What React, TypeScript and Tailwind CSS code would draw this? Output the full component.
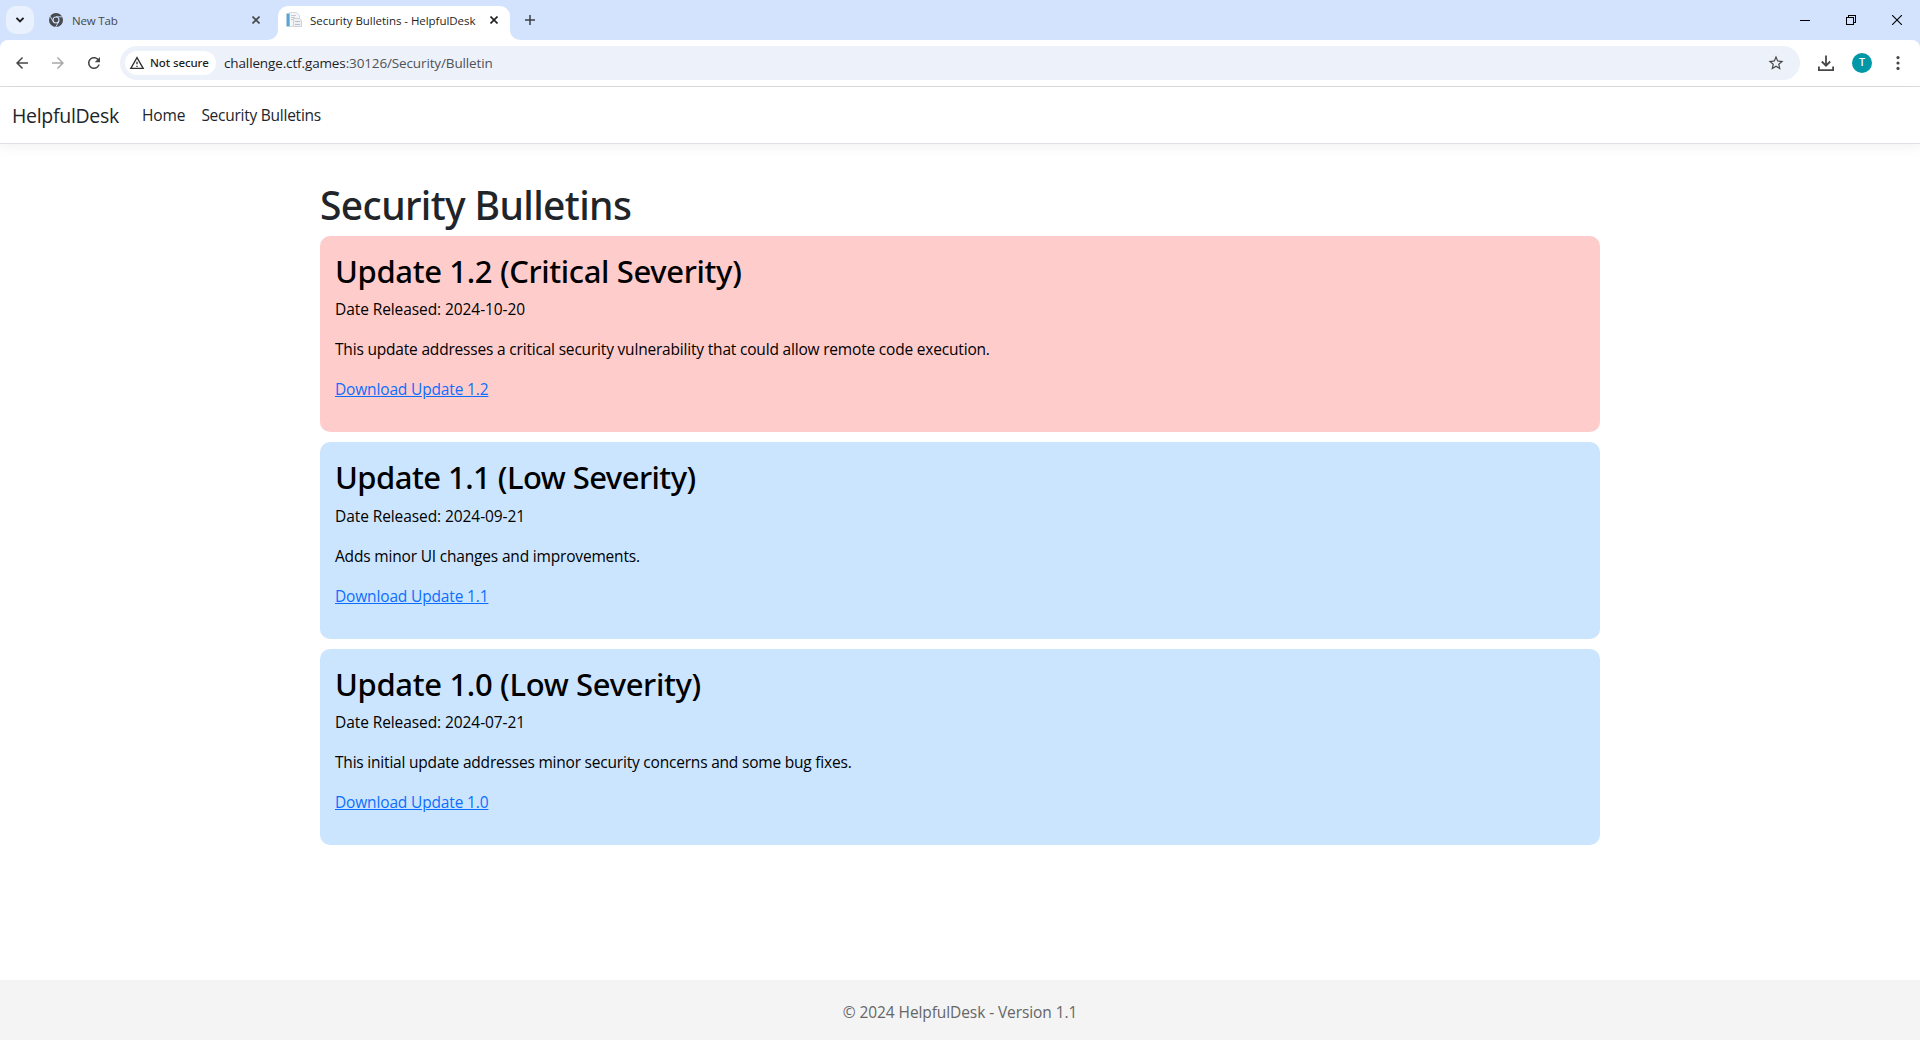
import type { ReactNode } from "react";

type Bulletin = {
  title: string;
  titleClass: string;
  date: string;
  body: string;
  bodyClass: string;
  link: string;
  color: string;
};

const bulletins: Bulletin[] = [
  {
    title: "Update 1.2 (Critical Severity)",
    titleClass: "tracking-[-0.35px]",
    date: "2024-10-20",
    body: "This update addresses a critical security vulnerability that could allow remote code execution.",
    bodyClass: "tracking-[-0.19px]",
    link: "Download Update 1.2",
    color: "bg-[#ffcccc]",
  },
  {
    title: "Update 1.1 (Low Severity)",
    titleClass: "tracking-[-0.54px]",
    date: "2024-09-21",
    body: "Adds minor UI changes and improvements.",
    bodyClass: "tracking-[-0.18px]",
    link: "Download Update 1.1",
    color: "bg-[#cce5ff]",
  },
  {
    title: "Update 1.0 (Low Severity)",
    titleClass: "tracking-[-0.33px]",
    date: "2024-07-21",
    body: "This initial update addresses minor security concerns and some bug fixes.",
    bodyClass: "tracking-[-0.205px]",
    link: "Download Update 1.0",
    color: "bg-[#cce5ff]",
  },
];

function Material({ size, d, className = "" }: { size: number; d: string; className?: string }) {
  return (
    <svg width={size} height={size} viewBox="0 0 24 24" fill="currentColor" className={"shrink-0 " + className}>
      <path d={d} />
    </svg>
  );
}

function ChromeLogo() {
  return (
    <svg width="14" height="14" viewBox="0 0 14 14" className="shrink-0">
      <circle cx="7" cy="7" r="7" fill="#474a4f" />
      <g stroke="#d3e3fd" strokeWidth="0.9" fill="none">
        <path d="M7 3.8H13.4" />
        <path d="M4.2 8.6L1 3.1" />
        <path d="M9.8 8.6L6.6 14.2" />
      </g>
      <circle cx="7" cy="7" r="3.5" fill="#d3e3fd" />
      <circle cx="7" cy="7" r="2.4" fill="#474a4f" />
    </svg>
  );
}

function PageIcon() {
  return (
    <svg width="16" height="16" viewBox="0 0 16 16" className="shrink-0">
      <path d="M3.5 0.5h7l3 3v11h-10z" fill="#f3f5f8" stroke="#d5dae0" />
      <rect x="0.5" y="1.5" width="3" height="13" fill="#5ba3d0" />
      <path d="M5 3.5h5M5 5.5h4M5 7.5h2" stroke="#c3cad2" />
      <path d="M7.5 6.500h6l2 2v6h-8z" fill="#eef0f3" stroke="#cdd2d9" />
      <path d="M9 9.5h5M9 12.500h5" stroke="#b9c0ca" />
    </svg>
  );
}

function Cross({ className }: { className: string }) {
  return (
    <svg width="8" height="8" viewBox="0 0 8 8" className={"shrink-0 " + className} stroke="currentColor" strokeWidth="1.6">
      <path d="M0.5 0.500L7.500 7.500M7.500 0.500L0.500 7.500" />
    </svg>
  );
}

function TabCurve({ flip = false }: { flip?: boolean }) {
  return (
    <svg width="10" height="10" viewBox="0 0 10 10" className={"shrink-0 self-end " + (flip ? "-scale-x-100" : "")}>
      <path d="M10 0V10H0A10 10 0 0 0 10 0Z" fill="#fff" />
    </svg>
  );
}

function TabStrip() {
  return (
    <div className="flex h-10 bg-[#d3e3fd] pt-1.5 pl-1.5">
      <div className="flex size-7 items-center justify-center rounded-[10px] bg-[#e9f1fe] text-[#1f1f1f]">
        <svg width="8" height="6" viewBox="0 0 8 6" fill="none" stroke="currentColor" strokeWidth="1.9">
          <path d="M0.500 0.800L4 4.300L7.500 0.800" />
        </svg>
      </div>
      <div className="flex h-7 w-[234px] items-center pl-[15px] text-[#474747]">
        <ChromeLogo />
        <span className="ml-[9px] pt-px text-[11.5px] tracking-[-0.18px]">New Tab</span>
        <Cross className="mr-[8px] ml-auto text-[#474747]" />
      </div>
      <TabCurve />
      <div className="flex h-[34px] w-[232px] items-start rounded-t-[10px] bg-white">
        <div className="flex h-7 w-full items-center pl-2 text-[#1f1f1f]">
          <PageIcon />
          <span className="ml-2 pt-px whitespace-nowrap text-[11.5px] tracking-[-0.04px]">
            Security Bulletins - HelpfulDesk
          </span>
          <Cross className="mr-[12px] ml-auto text-[#1f1f1f]" />
        </div>
      </div>
      <TabCurve flip />
      <svg width="10" height="10" viewBox="0 0 10 10" className="mt-[9px] ml-[5px]" stroke="#3c4043" strokeWidth="1.5">
        <path d="M5 0V10M0 5H10" />
      </svg>
      <div className="mr-[18px] ml-auto flex h-7 items-center text-black">
        <svg width="10" height="10" viewBox="0 0 10 10" stroke="currentColor" shapeRendering="crispEdges">
          <path d="M0 5.500H10" />
        </svg>
        <svg width="10" height="10" viewBox="0 0 10 10" className="ml-9" fill="none" stroke="currentColor" shapeRendering="crispEdges">
          <path d="M0.500 2.500H7.500V9.500H0.500ZM2.500 2.500V0.500H9.500V7.500H7.500" />
        </svg>
        <svg width="10" height="10" viewBox="0 0 10 10" className="ml-9" stroke="currentColor" strokeWidth="1.1">
          <path d="M0 0L10 10M10 0L0 10" />
        </svg>
      </div>
    </div>
  );
}

const ARROW = "M20 11H7.830l5.590-5.590L12 4l-8 8 8 8 1.410-1.410L7.830 13H20v-2z";
const RELOAD =
  "M17.650 6.350C16.200 4.900 14.210 4 12 4c-4.420 0-7.990 3.580-7.990 8s3.570 8 7.990 8c3.730 0 6.840-2.550 7.730-6h-2.080c-.82 2.330-3.040 4-5.650 4-3.310 0-6-2.690-6-6s2.690-6 6-6c1.660 0 3.140.69 4.220 1.780L13 11h7V4l-2.350 2.350z";
const STAR =
  "M22 9.240l-7.190-.62L12 2 9.190 8.630 2 9.240l5.460 4.730L5.820 21 12 17.270 18.180 21l-1.630-7.030L22 9.240zM12 15.400l-3.760 2.270 1-4.280-3.320-2.880 4.380-.38L12 6.100l1.710 4.040 4.380.38-3.320 2.880 1 4.280L12 15.400z";
const WARNING = "M12 5.990L19.530 19H4.470L12 5.990M12 2L1 21h22L12 2zm1 14h-2v2h2v-2zm0-6h-2v4h2v-4z";

function Toolbar() {
  return (
    <div className="bg-[#d3e3fd]">
      <div className="flex h-[47px] items-center rounded-t-lg border-b border-[#dcdcdc] bg-white text-[#474747]">
        <Material size={18} d={ARROW} className="ml-[13px]" />
        <Material size={18} d={ARROW} className="ml-[18px] rotate-180 text-[#a9a9a9]" />
        <Material size={18} d={RELOAD} className="ml-[18px]" />
        <div className="ml-[17px] flex h-[34px] w-[1680px] items-center rounded-full bg-[#edf1fa] pl-[5px]">
          <div className="flex h-6 w-[91px] items-center rounded-full bg-white pl-1 text-[#1f1f1f]">
            <Material size={16} d={WARNING} className="text-[#303030]" />
            <span className="ml-[5px] whitespace-nowrap font-['Noto_Sans',sans-serif] text-[11.5px] font-medium tracking-[-0.1px]">
              Not secure
            </span>
          </div>
          <span className="ml-2 whitespace-nowrap text-[13.5px] tracking-[-0.13px] text-[#4f5257]">
            <span className="text-[#1f1f1f]">challenge.ctf.games</span>:30126/Security/Bulletin
          </span>
          <Material size={18} d={STAR} className="mr-[15px] ml-auto" />
        </div>
        <svg width="16" height="16" viewBox="0 0 16 16" className="ml-[18px]" fill="none" stroke="currentColor" strokeWidth="1.8">
          <path d="M8 0.500V10.500M3.800 6.500L8 10.700L12.200 6.500M0.900 11.500V15.100H15.100V11.500" />
        </svg>
        <div className="ml-[18px] flex size-5 items-center justify-center rounded-full bg-[#0097a7] font-['Roboto',sans-serif] text-[10px] font-medium text-white">
          T
        </div>
        <svg width="4" height="14" viewBox="0 0 4 14" className="ml-6" fill="currentColor">
          <circle cx="2" cy="1.600" r="1.600" />
          <circle cx="2" cy="7" r="1.600" />
          <circle cx="2" cy="12.400" r="1.600" />
        </svg>
      </div>
    </div>
  );
}

function Line({ children }: { children: ReactNode }) {
  return <p className="mb-4 h-6">{children}</p>;
}

export default function App() {
  return (
    <div className="flex h-[1040px] w-[1920px] flex-col overflow-hidden bg-white font-['Open_Sans',sans-serif] text-[15.5px] leading-6 text-[#212529]">
      <TabStrip />
      <Toolbar />
      <nav className="flex h-[57px] shrink-0 items-center border-b border-[#dee2e6] pl-3 shadow-[0_4px_12px_rgba(0,0,0,0.05)]">
        <span className="pt-0.5 text-[19.5px] leading-[30px] tracking-[-0.3px]">HelpfulDesk</span>
        <span className="ml-[23px] tracking-[-0.1px]">Home</span>
        <span className="ml-4 tracking-[-0.25px]">Security Bulletins</span>
      </nav>
      <main className="mx-auto mt-9 w-[1280px] grow">
        <h1 className="mb-2 h-12 pt-px font-['Noto_Sans',sans-serif] text-[39px] leading-[48px] font-medium tracking-[-0.62px]">
          Security Bulletins
        </h1>
        <div className="flex flex-col gap-2.5 text-black">
          {bulletins.map((b) => (
            <section key={b.title} className={"h-[196.400px] rounded-[10px] p-[15px] " + b.color}>
              <h2 className={"mb-2 h-[38.400px] pt-px font-['Noto_Sans',sans-serif] text-[31px] leading-[38.400px] font-medium " + b.titleClass}>
                {b.title}
              </h2>
              <Line>
                <span className="tracking-[-0.085px]">Date Released: {b.date}</span>
              </Line>
              <Line>
                <span className={b.bodyClass}>{b.body}</span>
              </Line>
              <Line>
                <a className="tracking-[-0.155px] text-[#0d6efd] underline">{b.link}</a>
              </Line>
            </section>
          ))}
        </div>
      </main>
      <footer className="flex h-[60px] shrink-0 items-center justify-center bg-[#f4f4f4] pt-1 text-[#666666]">
        <span className="tracking-[-0.09px]">© 2024 HelpfulDesk - Version 1.1</span>
      </footer>
    </div>
  );
}
